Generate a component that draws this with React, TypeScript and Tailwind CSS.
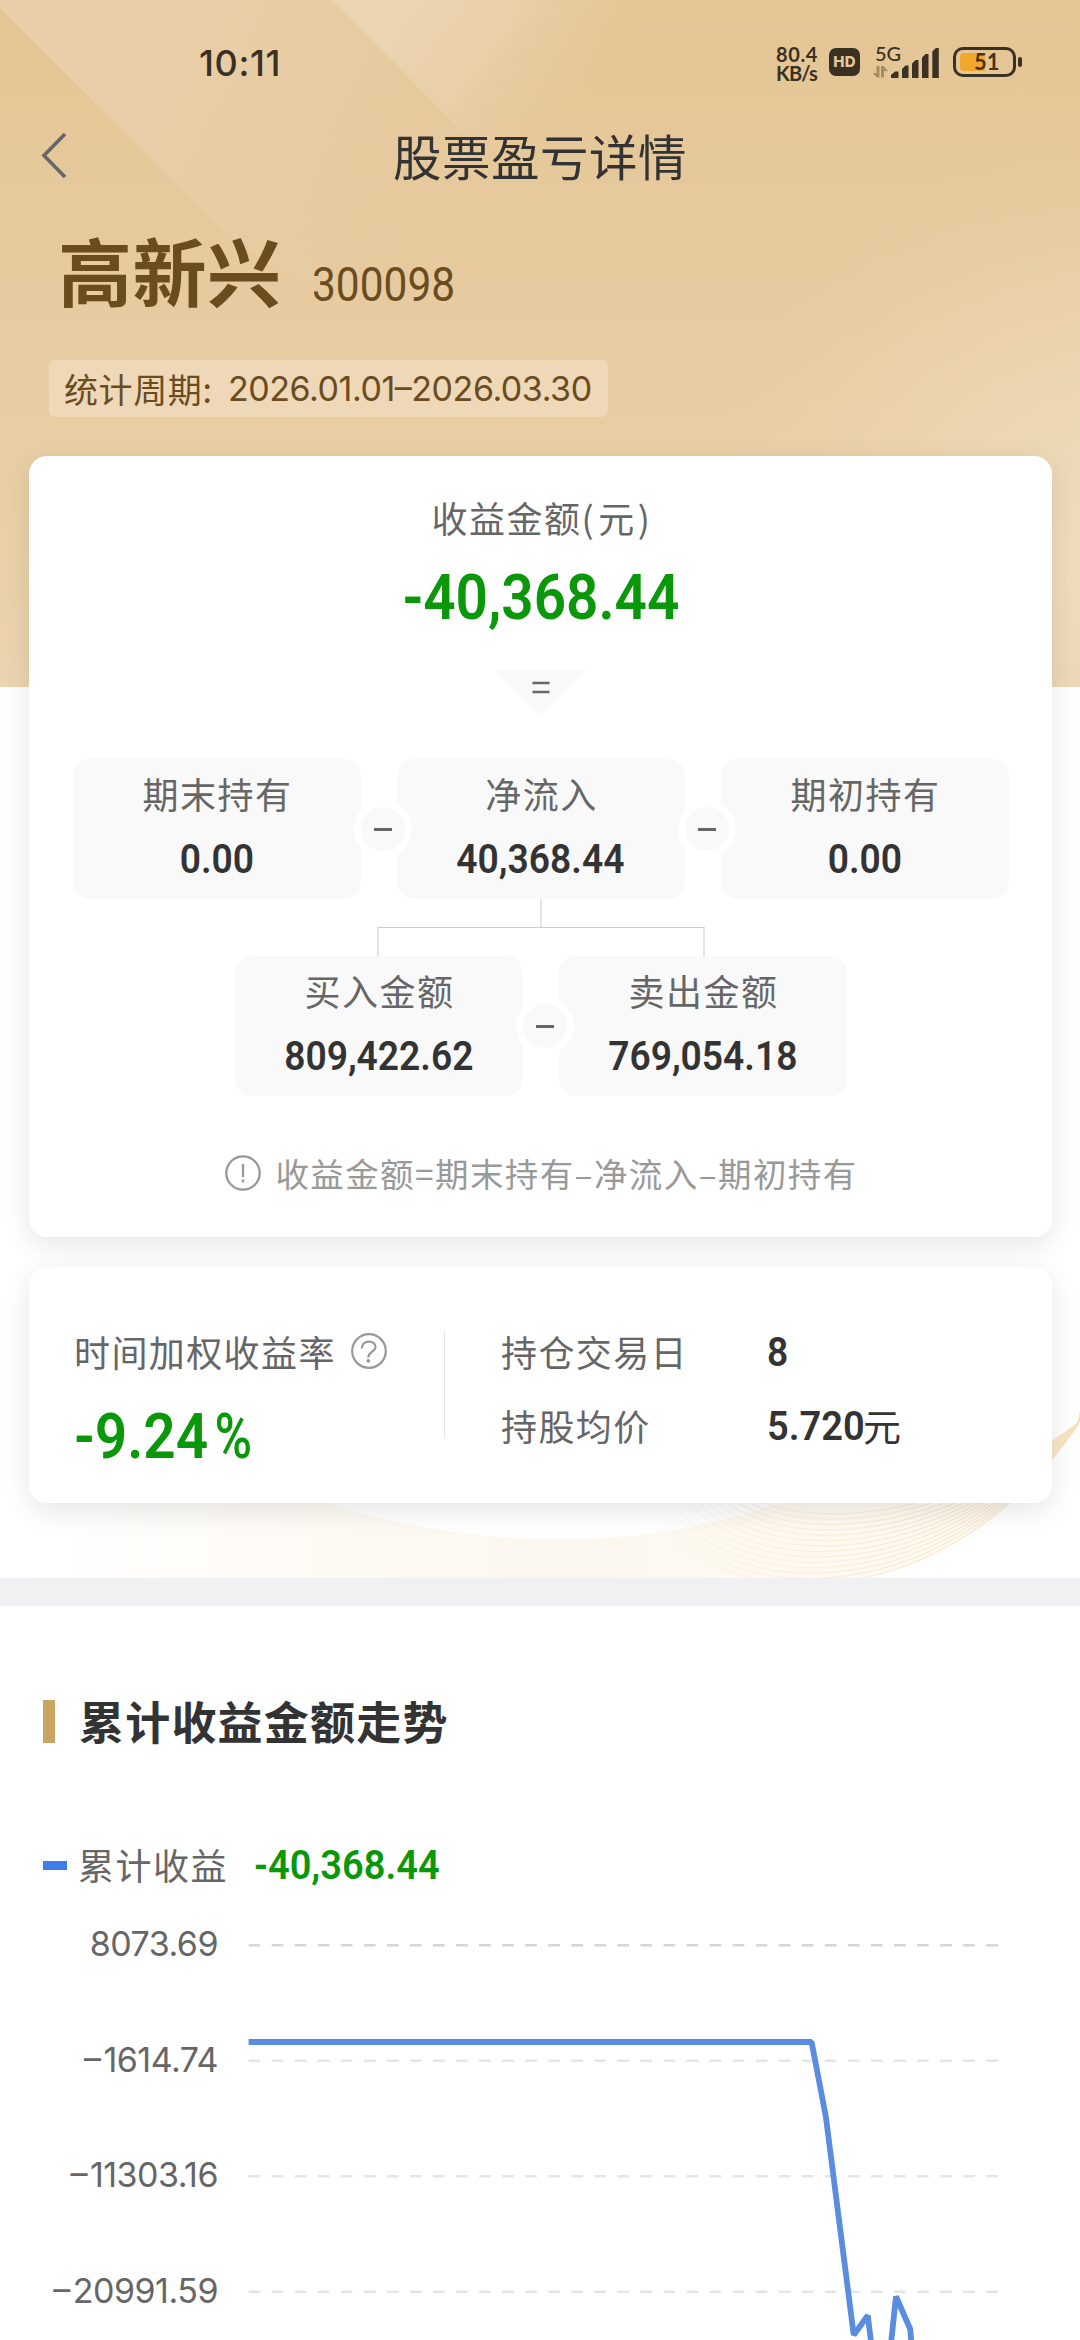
import type { ReactNode } from "react";

type TextProps = { children: ReactNode; className?: string };

const Cjk = ({ children, className = "" }: TextProps) => (
  <span className={`font-['Noto_Sans_CJK_SC',sans-serif] whitespace-nowrap ${className}`}>{children}</span>
);

// Condensed figures used for every amount
const Num = ({ children, className = "" }: TextProps) => (
  <span className={`inline-block font-['Roboto',sans-serif] whitespace-nowrap ${className}`}>{children}</span>
);

const HeaderBackground = () => (
  <svg className="absolute left-0 top-0" width="1080" height="687" viewBox="0 0 1080 687">
    <defs>
      <linearGradient id="base" x1="0" y1="0" x2="0" y2="1">
        <stop offset="0" stopColor="#e4c594" />
        <stop offset="0.45" stopColor="#e7cba0" />
        <stop offset="0.75" stopColor="#e9d0a6" />
        <stop offset="1" stopColor="#ecd4b0" />
      </linearGradient>
      <linearGradient id="beamA" gradientUnits="userSpaceOnUse" x1="120" y1="120" x2="420" y2="300">
        <stop offset="0" stopColor="#e9cea8" />
        <stop offset="0.5" stopColor="#e8cca3" stopOpacity="0.8" />
        <stop offset="1" stopColor="#e7cba0" stopOpacity="0" />
      </linearGradient>
      <linearGradient id="beamB" gradientUnits="userSpaceOnUse" x1="400" y1="0" x2="560" y2="130">
        <stop offset="0" stopColor="#ebd5b3" />
        <stop offset="0.5" stopColor="#ead0aa" stopOpacity="0.8" />
        <stop offset="1" stopColor="#e6c99c" stopOpacity="0" />
      </linearGradient>
      <radialGradient id="glow" gradientUnits="userSpaceOnUse" cx="1120" cy="560" r="420">
        <stop offset="0" stopColor="#efdfc2" />
        <stop offset="0.45" stopColor="#edd8b5" stopOpacity="0.75" />
        <stop offset="1" stopColor="#ebd2ac" stopOpacity="0" />
      </radialGradient>
    </defs>
    <rect width="1080" height="687" fill="url(#base)" />
    <path d="M0 8 L232 240 L500 400 L700 0 L0 0 Z" fill="url(#beamA)" />
    <path d="M332 0 L500 170 L760 170 L760 0 Z" fill="url(#beamB)" />
    <rect width="1080" height="687" fill="url(#glow)" />
  </svg>
);

const WaveBackground = () => {
  const lines = Array.from({ length: 14 }, (_, i) => i / 13);
  return (
    <svg className="absolute left-0 top-[1400px]" width="1080" height="178" viewBox="0 1400 1080 178">
      <defs>
        <linearGradient id="cream" x1="0" y1="0" x2="1" y2="0">
          <stop offset="0.03" stopColor="#fdf6ea" stopOpacity="0" />
          <stop offset="0.5" stopColor="#fcf7ee" />
          <stop offset="0.72" stopColor="#fefaf1" />
          <stop offset="1" stopColor="#fefbf4" />
        </linearGradient>
        <linearGradient id="strand" gradientUnits="userSpaceOnUse" x1="640" y1="0" x2="1080" y2="0">
          <stop offset="0" stopColor="#f6e6cb" stopOpacity="0" />
          <stop offset="0.4" stopColor="#f8ebd3" stopOpacity="0.8" />
          <stop offset="0.85" stopColor="#f6e2bf" stopOpacity="0.8" />
          <stop offset="1" stopColor="#f5dfb8" stopOpacity="0.6" />
        </linearGradient>
      </defs>
      <path
        d="M0 1470 L280 1488 C400 1530 480 1539 560 1539 C660 1539 720 1522 790 1500 C900 1500 1000 1470 1078 1424 C1020 1510 950 1560 860 1580 L0 1580 Z"
        fill="url(#cream)"
      />
      {lines.map((t) => (
        <path
          key={t}
          d={`M${730 - 100 * t} ${1480 + 10 * t} C${770 - 70 * t} ${1530 + 90 * t} ${930 + 8 * t} ${1535 + 95 * t} 1078 ${1423 + 2 * t} L1081 ${1418 - 10 * t}`}
          fill="none"
          stroke="url(#strand)"
          strokeWidth="1.2"
        />
      ))}
    </svg>
  );
};

const StatusBar = () => (
  <div className="flex h-[96px] items-start">
    <span className="ml-[199px] mt-[43px] font-['Inter',sans-serif] text-[36px] font-medium leading-[40px] tracking-[0.6px] text-[#3a3122]">
      10:11
    </span>
    <div className="ml-auto mr-[64px] mt-[45px] flex">
      <div className="w-[53px] font-['Lato',sans-serif] text-[20px] font-bold text-[#3a3122]">
        <div className="h-[19px] leading-[19px] tracking-[0.6px]">80.4</div>
        <div className="h-[19px] leading-[19px] tracking-[-0.8px]">KB/s</div>
      </div>
      <div className="mt-[3px] flex h-[28px] w-[31px] items-center justify-center rounded-[7px] bg-[#3a3122] font-['Inter',sans-serif] text-[15px] font-extrabold tracking-[0.3px] text-[#e6c89a]">
        HD
      </div>
      <div className="ml-[11px] h-[36px] w-[70px]">
        <div className="ml-[4px] h-[17px] font-['Lato',sans-serif] text-[20px] font-medium leading-[17px] text-[#3a3122]">5G</div>
        <svg className="-mt-[17px]" width="70" height="34" viewBox="870 45 70 34">
          <path d="M878.5 66 V77.5 H876 L871.5 73 H875.5 V66 Z M880 77.5 V66 H882.5 L887 71 H883 V77.5 Z" fill="#a48d64" />
          <g fill="#3a3122">
            <path d="M890 78 V75 L894 71.5 H897.5 V78 Z" />
            <path d="M901 78 V69 L904.5 65.5 H907.5 V78 Z" />
            <path d="M911 78 V63.5 L914.5 60 H917.5 V78 Z" />
            <path d="M921 78 V57.5 L924.5 54 H927.5 V78 Z" />
            <path d="M931.3 78 V51.5 L934.8 48 H937.8 V78 Z" />
          </g>
        </svg>
      </div>
      <div className="relative ml-[12px] mt-[2px] h-[30px] w-[63px] rounded-[10px] border-[3px] border-[#3a3122]">
        <div className="ml-[4px] mt-[3px] h-[18px] w-[25px] rounded-l-[4px] bg-[#f2a72e]" />
        <span className="absolute left-[18px] top-[1px] font-['Lato',sans-serif] text-[22px] font-bold leading-[22px] text-[#4a3312]">51</span>
        <div className="absolute -right-[9px] top-[7px] h-[10px] w-[4px] rounded-full bg-[#3a3122]" />
      </div>
    </div>
  </div>
);

const MinusBadge = ({ className = "" }: { className?: string }) => (
  <div
    className={`absolute flex h-[58px] w-[58px] items-center justify-center rounded-full border-[7px] border-white bg-[#f9f9f9] ${className}`}
  >
    <div className="h-[3px] w-[18px] bg-[#666]" />
  </div>
);

const AmountBox = ({ label, value }: { label: string; value: string }) => (
  <div className="flex h-[140px] w-[288px] flex-col items-center rounded-[17px] bg-[#f9f9f9]">
    <Cjk className="ml-[2px] mt-[13px] text-[36px] leading-[42px] tracking-[1.5px] text-[#666]">{label}</Cjk>
    <Num className="mt-[23px] scale-x-[0.93] text-[40px] font-semibold leading-[46px] text-[#333]">{value}</Num>
  </div>
);

const ProfitCard = () => (
  <section className="mx-[29px] flex h-[781px] w-[1023px] flex-col items-center rounded-[18px] bg-white shadow-[0_8px_28px_rgba(0,0,0,0.1)]">
    <Cjk className="ml-[2px] mt-[40px] text-[36px] leading-[42px] tracking-[1.5px] text-[#666]">
      收益金额(<span className="ml-[3px]">元</span><span className="ml-[2px]">)</span>
    </Cjk>
    <Num className="mt-[23px] scale-x-[0.9] text-[63px] font-semibold leading-[74px] text-[#0a970a]">-40,368.44</Num>
    <svg className="mt-[35px]" width="92" height="46" viewBox="0 0 92 46">
      <path d="M0 0 H92 L46 46 Z" fill="#f9f9f9" />
      <path d="M37.5 13 H54.5 M37.5 22 H54.5" stroke="#666" strokeWidth="2.6" />
    </svg>
    <div className="relative mt-[43px] flex gap-[36px]">
      <AmountBox label="期末持有" value="0.00" />
      <AmountBox label="净流入" value="40,368.44" />
      <AmountBox label="期初持有" value="0.00" />
      <MinusBadge className="left-[281px] top-[41px]" />
      <MinusBadge className="left-[605px] top-[41px]" />
    </div>
    <div className="flex w-[328px] flex-col items-center">
      <div className="h-[28px] w-[2px] bg-[#e4e4e4]" />
      <div className="h-[29px] w-full border-x-2 border-t border-x-[#e4e4e4] border-t-[#ccc]" />
    </div>
    <div className="relative flex gap-[36px]">
      <AmountBox label="买入金额" value="809,422.62" />
      <AmountBox label="卖出金额" value="769,054.18" />
      <MinusBadge className="left-[281px] top-[41px]" />
    </div>
    <div className="ml-[2px] mt-[57px] flex items-center gap-[14px]">
      <svg width="36" height="36" viewBox="0 0 36 36" fill="none" stroke="#999" strokeWidth="2.3">
        <circle cx="18" cy="18" r="16.7" />
        <path d="M18 9 V22 M18 24.5 V27.5" />
      </svg>
      <Cjk className="text-[33.5px] leading-[40px] tracking-[1.4px] text-[#999]">收益金额=期末持有–净流入–期初持有</Cjk>
    </div>
  </section>
);

const StatsCard = () => (
  <section className="mx-[29px] mt-[30px] flex h-[236px] w-[1023px] rounded-[18px] bg-white shadow-[0_8px_28px_rgba(0,0,0,0.1)]">
    <div className="ml-[45px] mt-[63px] w-[370px]">
      <div className="flex h-[42px] items-center">
        <Cjk className="text-[36px] leading-[42px] tracking-[1.4px] text-[#666]">时间加权收益率</Cjk>
        <svg className="ml-[15px]" width="36" height="36" viewBox="0 0 36 36" fill="none" stroke="#999" strokeWidth="2.2">
          <circle cx="18" cy="18" r="16.8" />
          <path d="M10.8 15.5 C10.8 6.5 24.6 6.5 24.6 14.2 C24.6 18.5 17.5 18.5 17.3 24.5" />
          <circle cx="17.3" cy="27.8" r="1.9" fill="#999" stroke="none" />
        </svg>
      </div>
      <Num className="mt-[28px] origin-left scale-x-[0.9] text-[63px] font-semibold leading-[74px] text-[#0a970a]">
        -9.24<span className="ml-[7px] inline-block origin-left scale-x-[0.9] font-medium">%</span>
      </Num>
    </div>
    <div className="mt-[64px] h-[107px] w-px bg-[#e4e4e4]" />
    <div className="ml-[56px] mt-[63px] grid h-[116px] grid-cols-[266px_auto] content-between">
      <Cjk className="text-[36px] leading-[42px] tracking-[1.4px] text-[#666]">持仓交易日</Cjk>
      <Num className="mt-[3px] origin-left scale-x-[0.93] text-[40px] font-semibold leading-[39px] text-[#333]">8</Num>
      <Cjk className="text-[36px] leading-[42px] tracking-[1.4px] text-[#666]">持股均价</Cjk>
      <div className="flex h-[42px] text-[#333]">
        <Num className="mt-[2px] w-[96px] origin-left scale-x-[0.95] text-[40px] font-semibold leading-[42px]">5.720</Num>
        <Cjk className="text-[38px] leading-[42px]">元</Cjk>
      </div>
    </div>
  </section>
);

const ticks = ["8073.69", "–1614.74", "–11303.16", "–20991.59"];

const TrendChart = () => (
  <div className="mt-[5px] flex h-[440px]">
    <div className="-mt-[14px] w-[218px] text-right font-['Inter',sans-serif] text-[34px] leading-[115.5px] tracking-[-0.5px] text-[#666] [font-feature-settings:'case']">
      {ticks.map((tick) => (
        <div key={tick} className="h-[115.5px]">
          {tick.startsWith("–") && <span className="mr-[3px]">–</span>}
          {tick.replace("–", "")}
        </div>
      ))}
    </div>
    <svg className="ml-[30px]" width="760" height="440" viewBox="248 1900 760 440" fill="none">
      {ticks.map((tick, i) => (
        <path
          key={tick}
          d={`M248.6 ${1945.3 + i * 115.5} H998`}
          stroke={i === 0 ? "#d6d6d6" : "#e5e5e5"}
          strokeWidth="2.6"
          strokeDasharray="11.7 11.35"
        />
      ))}
      <path
        d="M248.6 2042 H811.6 L825.9 2117 L839.8 2226 L853.7 2335 L867.8 2315.5 L881.8 2430 L896 2296.5 L910.2 2329 L924 2480"
        stroke="#5a8de0"
        strokeWidth="5.8"
        strokeLinejoin="bevel"
      />
    </svg>
  </div>
);

export default function App() {
  return (
    <div className="relative h-[2340px] w-[1080px] overflow-hidden bg-white">
      <HeaderBackground />
      <WaveBackground />
      <div className="relative">
        <StatusBar />
        <div className="grid h-[120px] grid-cols-[1fr_auto_1fr] items-center">
          <svg className="ml-[40px]" width="28" height="48" viewBox="0 0 28 48" fill="none">
            <path d="M25 2 L4 23.5 L25 45" stroke="#666" strokeWidth="3.6" />
          </svg>
          <Cjk className="-mt-[2px] text-[48.5px] leading-[56px] tracking-[0.5px] text-[#333]">股票盈亏详情</Cjk>
        </div>
        <div className="ml-[58px] mt-[9px] flex h-[88px] items-baseline text-[#6b4c1f]">
          <Cjk className="text-[74px] font-bold leading-[88px] tracking-[0.5px]">高新兴</Cjk>
          <Num className="ml-[30px] origin-left scale-x-[0.885] text-[48px]">300098</Num>
        </div>
        <div className="ml-[49px] mt-[47px] flex h-[57px] w-[559px] items-center rounded-[6px] bg-[#eed8b8] text-[#6b4c1f]">
          <Cjk className="ml-[15px] w-[164px] text-[34px] leading-[40px] tracking-[0.6px]">统计周期:</Cjk>
          <span className="font-['Inter',sans-serif] text-[34px] leading-[40px] tracking-[-0.45px] whitespace-nowrap [font-feature-settings:'case']">
            2026.01.01–2026.03.30
          </span>
        </div>
        <div className="mt-[39px]">
          <ProfitCard />
          <StatsCard />
        </div>
        <div className="mt-[75px] h-[28px] bg-[#f1f1f3]" />
        <div className="flex h-[230px] items-center pl-[43px]">
          <div className="h-[43px] w-[12px] bg-[#c9a563]" />
          <Cjk className="ml-[24px] text-[45px] font-bold leading-[52px] tracking-[1.2px] text-[#333]">累计收益金额走势</Cjk>
        </div>
        <div className="flex h-[59px] items-center pl-[43px]">
          <div className="h-[9px] w-[24px] bg-[#3f7de8]" />
          <Cjk className="-mt-[4px] ml-[11px] w-[176px] text-[36px] leading-[42px] tracking-[1.5px] text-[#666]">累计收益</Cjk>
          <Num className="origin-left scale-x-[0.95] text-[40px] font-semibold leading-[46px] text-[#0a970a]">-40,368.44</Num>
        </div>
        <TrendChart />
      </div>
    </div>
  );
}
